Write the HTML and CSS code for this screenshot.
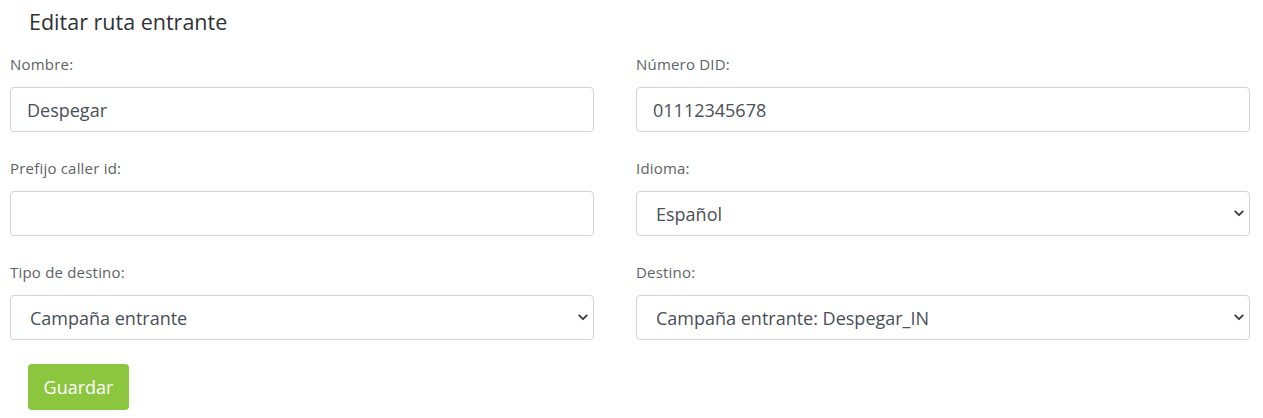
FILE: index.html
```html
<!DOCTYPE html>
<html lang="es">
<head>
  <meta charset="UTF-8" />
  <title>Editar ruta entrante</title>
  <link rel="stylesheet" href="styles.css">
</head>
<body>
  <h1 class="page-title">Editar ruta entrante</h1>
  <form class="route-form">
    <div class="form-grid">

      <div class="field">
        <label for="nombre">Nombre:</label>
        <input id="nombre" class="control" type="text" value="Despegar">
      </div>

      <div class="field">
        <label for="did">Número DID:</label>
        <input id="did" class="control" type="text" value="01112345678">
      </div>

      <div class="field">
        <label for="prefijo">Prefijo caller id:</label>
        <input id="prefijo" class="control" type="text" value="">
      </div>

      <div class="field">
        <label for="idioma">Idioma:</label>
        <div class="select-wrap">
          <select id="idioma" class="control">
            <option>Español</option>
            <option>Inglés</option>
          </select>
          <svg class="chevron" viewBox="0 0 12 8"><path d="M1.5 1.5 6 6l4.5-4.5" fill="none" stroke="#343a40" stroke-width="2.2" stroke-linecap="round" stroke-linejoin="round"/></svg>
        </div>
      </div>

      <div class="field">
        <label for="tipo">Tipo de destino:</label>
        <div class="select-wrap">
          <select id="tipo" class="control">
            <option>Campaña entrante</option>
          </select>
          <svg class="chevron" viewBox="0 0 12 8"><path d="M1.5 1.5 6 6l4.5-4.5" fill="none" stroke="#343a40" stroke-width="2.2" stroke-linecap="round" stroke-linejoin="round"/></svg>
        </div>
      </div>

      <div class="field">
        <label for="destino">Destino:</label>
        <div class="select-wrap">
          <select id="destino" class="control">
            <option>Campaña entrante: Despegar_IN</option>
          </select>
          <svg class="chevron" viewBox="0 0 12 8"><path d="M1.5 1.5 6 6l4.5-4.5" fill="none" stroke="#343a40" stroke-width="2.2" stroke-linecap="round" stroke-linejoin="round"/></svg>
        </div>
      </div>

    </div>
    <button type="submit" class="btn-save">Guardar</button>
  </form>
</body>
</html>
```

FILE: styles.css
```css
body {
  margin: 0;
  padding: 0 13px 0 10px;
  font-family: "Open Sans", "Noto Sans", sans-serif;
  background: #fff;
  color: #333;
}
.page-title {
  margin: 0;
  padding: 8px 0 0 19px;
  height: 42px;
  box-sizing: border-box;
  font-size: 21.5px;
  font-weight: 500;
  line-height: 28px;
  color: #2f3234;
}
.form-grid {
  display: grid;
  grid-template-columns: 584px 614px;
  column-gap: 42px;
  row-gap: 14px;
}
.field {
  display: flex;
  flex-direction: column;
}
.field label {
  font-size: 15px;
  letter-spacing: 0.2px;
  line-height: 20px;
  color: #5d6466;
  margin: 12px 0 13px;
}
.control {
  width: 100%;
  height: 45px;
  box-sizing: border-box;
  border: 1px solid #ced4da;
  border-radius: 4px;
  padding: 0 16px;
  font-family: inherit;
  font-size: 18px;
  color: #495057;
  background: #fff;
  outline: none;
}
select.control {
  appearance: none;
  -webkit-appearance: none;
  padding: 0 36px 0 19px;
}
.select-wrap {
  position: relative;
}
.chevron {
  position: absolute;
  right: 6px;
  top: 19px;
  width: 10px;
  height: 7px;
  pointer-events: none;
}
.btn-save {
  margin: 24px 0 0 18px;
  width: 101px;
  height: 46px;
  border: none;
  border-radius: 4px;
  background: #8cc63f;
  color: #fff;
  font-family: inherit;
  font-size: 18px;
}
```
